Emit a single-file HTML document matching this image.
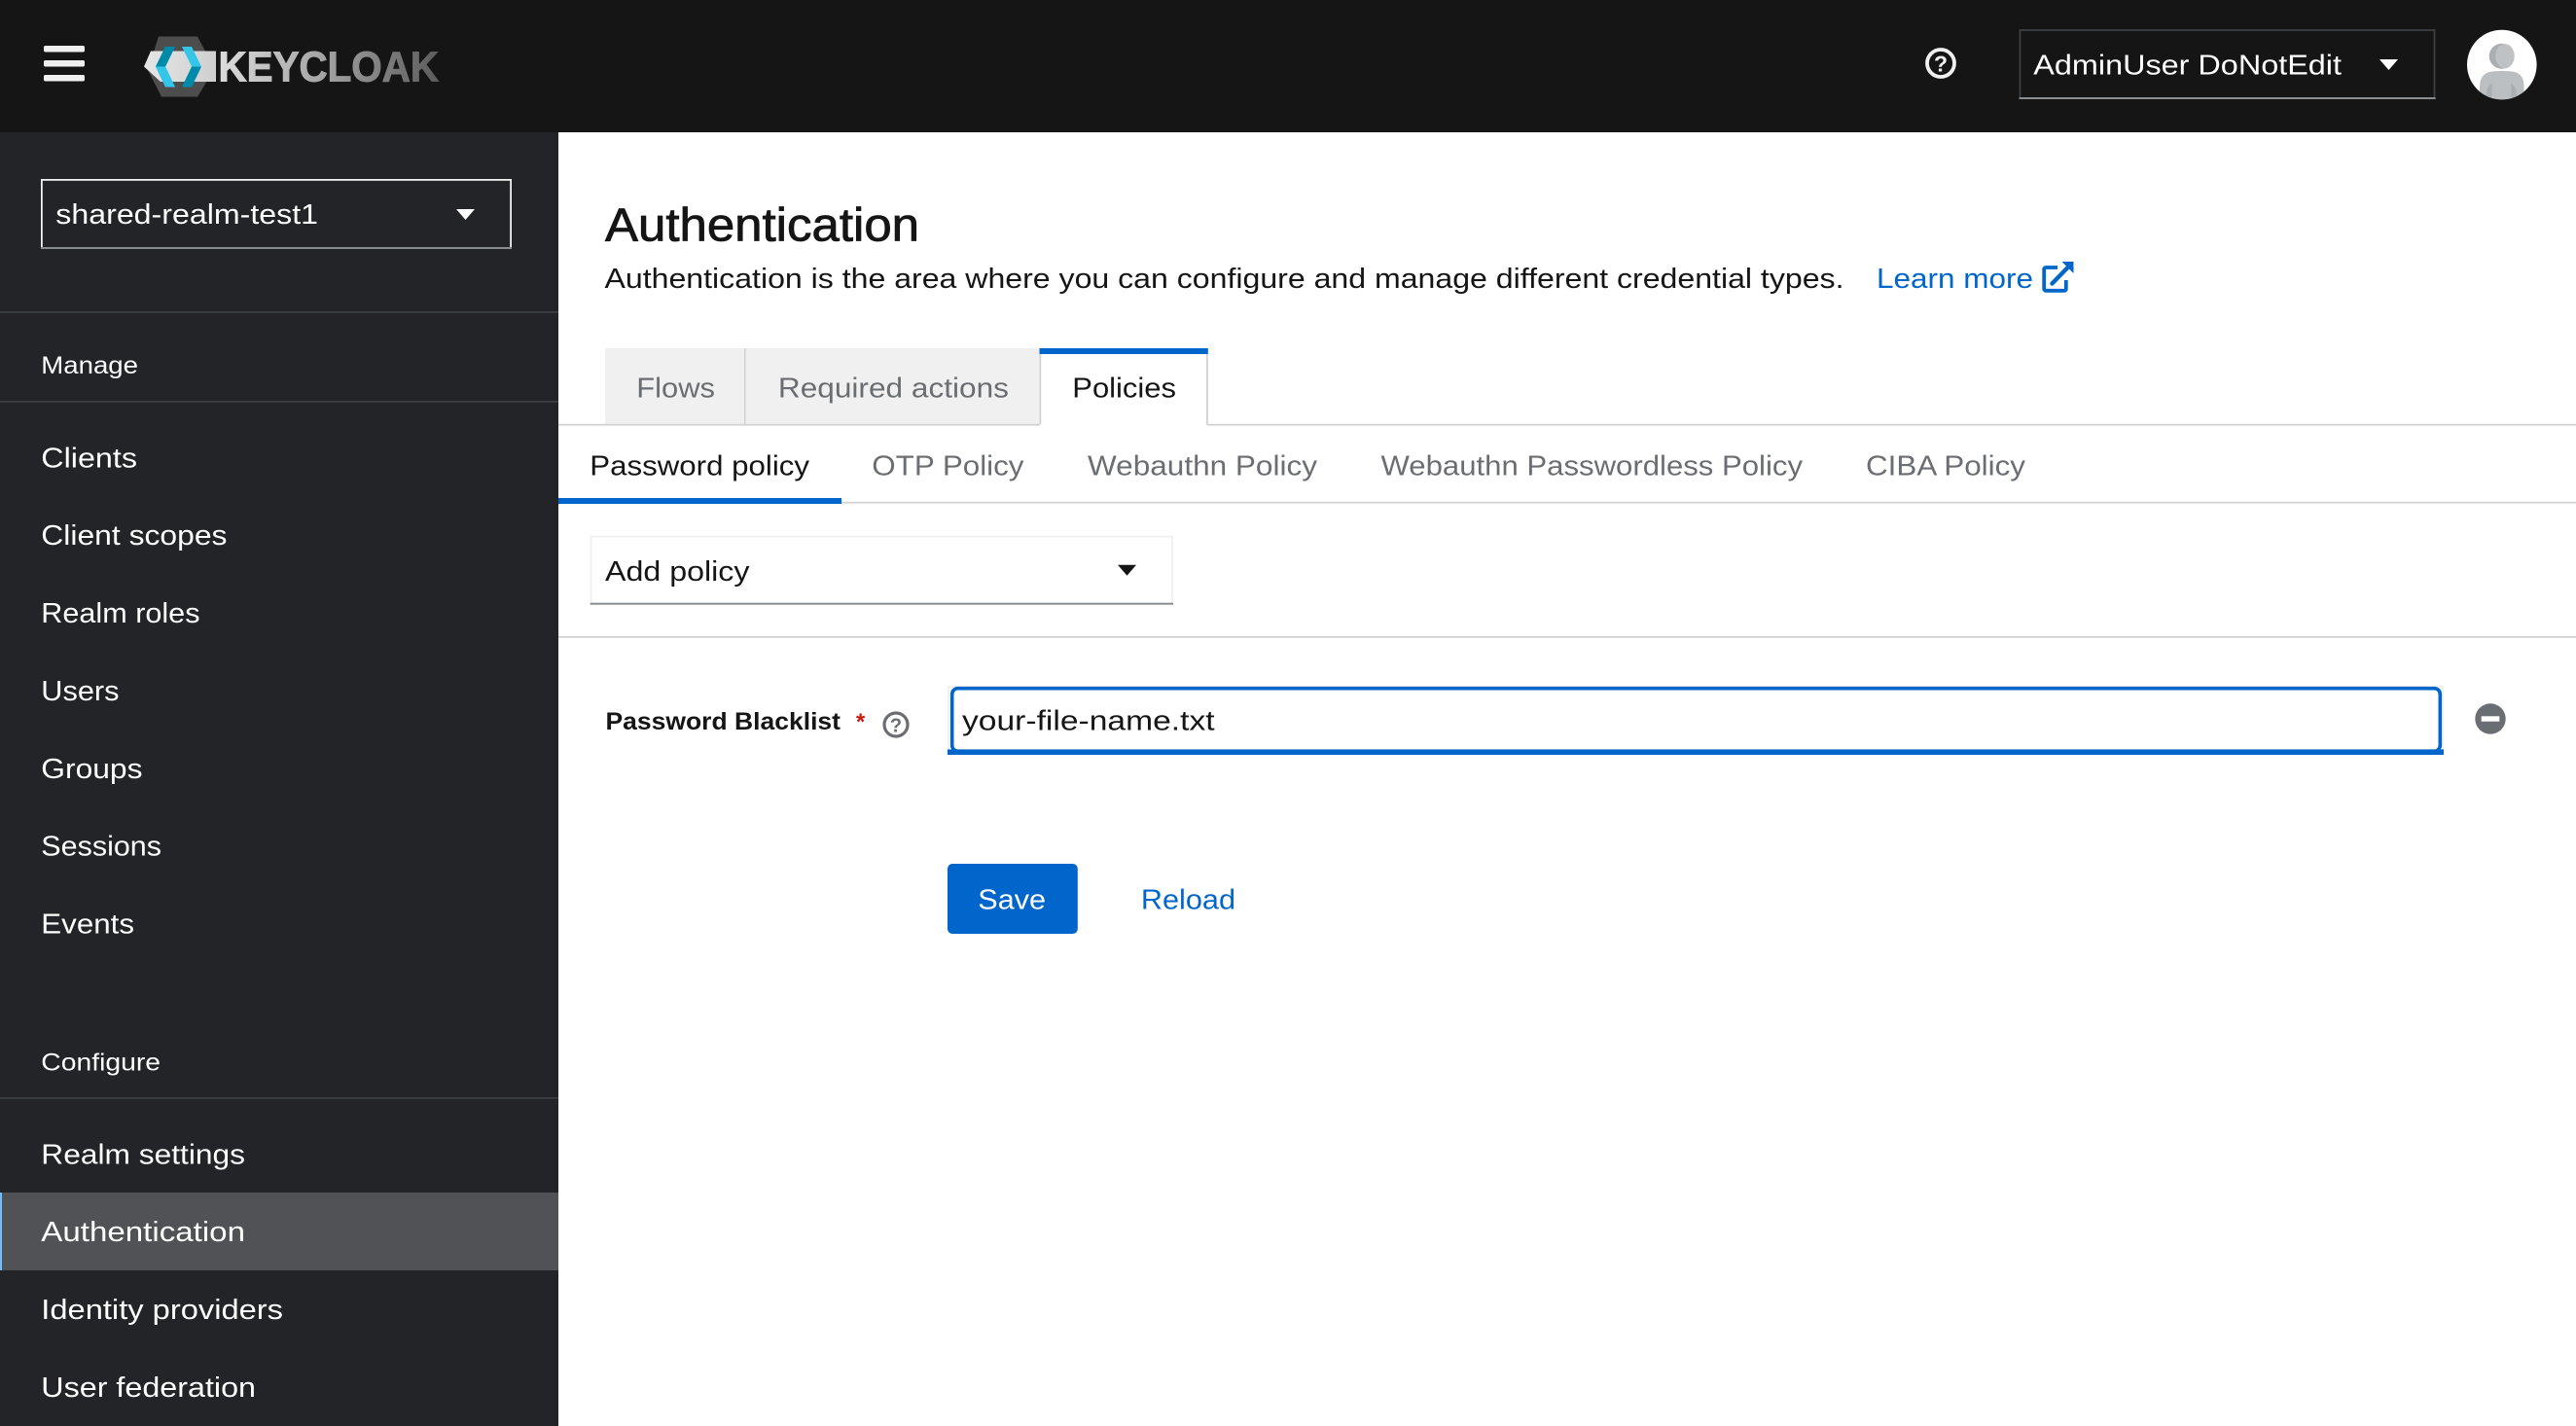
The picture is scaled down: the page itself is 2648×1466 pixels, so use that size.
<!DOCTYPE html>
<html lang="en">
<head>
<meta charset="utf-8">
<title>Authentication - Keycloak</title>
<style>
html,body{margin:0;padding:0;background:#fff;width:2648px;height:1466px;overflow:hidden}
svg{display:block;font-family:"Liberation Sans",sans-serif}
.n{font-size:29px;fill:#fff}
.s{font-size:25px;fill:#fff}
.d{font-size:29px;fill:#151515}
.g{font-size:29px;fill:#6a6e73}
.b{font-size:29px;fill:#06c}
</style>
</head>
<body>
<svg xmlns="http://www.w3.org/2000/svg" width="2648" height="1466" viewBox="0 0 2648 1466">
<defs>
<linearGradient id="kc" gradientUnits="userSpaceOnUse" x1="225" y1="0" x2="451" y2="0"><stop offset="0" stop-color="#dcdcdc"/><stop offset=".5" stop-color="#a0a0a0"/><stop offset="1" stop-color="#5c5c5c"/></linearGradient>
<linearGradient id="band" gradientUnits="userSpaceOnUse" x1="148" y1="0" x2="222" y2="0"><stop offset="0" stop-color="#e6e6e6"/><stop offset="1" stop-color="#cfcfcf"/></linearGradient>
<clipPath id="av"><circle cx="2571.8" cy="66.5" r="35.8"/></clipPath>
</defs>

<!-- masthead -->
<rect x="0" y="0" width="2648" height="136" fill="#151515"/>
<g fill="#f0f0f0"><rect x="45" y="47" width="42" height="6.5" rx="1.7"/><rect x="45" y="62" width="42" height="6.5" rx="1.7"/><rect x="45" y="77" width="42" height="6.5" rx="1.7"/></g>

<!-- logo -->
<polygon points="163,37.5 203,37.5 216,62 216,78 203,99.5 166,99.5 152,72" fill="#4d4d4d"/>
<polygon points="155,52.5 222,52.5 222,84 165,84 148,68.5" fill="url(#band)"/>
<polygon points="170,48 180,48 170,68.5 180,89.5 170,89.5 160,68.5" fill="#00b8e3"/>
<polygon points="160,68.5 170,68.5 180,89.5 170,89.5" fill="#33c6e9"/>
<polygon points="160,68.5 170,48 180,48 170,68.5" fill="#008aaa"/>
<polygon points="187,48 197,48 207,68.5 197,68.5" fill="#33c6e9"/>
<polygon points="207,68.5 197,89.5 187,89.5 197,68.5" fill="#008aaa"/>
<text x="224.500" y="83.500" font-size="44" font-weight="700" fill="url(#kc)" stroke="url(#kc)" stroke-width="1" textLength="226.500" lengthAdjust="spacingAndGlyphs">KEYCLOAK</text>

<!-- help -->
<circle cx="1995" cy="65" r="14" fill="none" stroke="#f0f0f0" stroke-width="3.800"/>
<text x="1995" y="73.500" font-size="23" font-weight="700" fill="#f0f0f0" text-anchor="middle">?</text>

<!-- user dropdown -->
<rect x="2076.5" y="31" width="426" height="70" fill="none" stroke="#3c3f42" stroke-width="1.8"/>
<rect x="2075.6" y="100" width="428" height="2" fill="#8a8d90"/>
<text class="n" x="2090.300" y="76.500" textLength="316.700" lengthAdjust="spacingAndGlyphs">AdminUser DoNotEdit</text>
<polygon points="2446,61 2465,61 2455.5,72" fill="#fff"/>

<!-- avatar -->
<circle cx="2571.8" cy="66.5" r="35.8" fill="#fff"/>
<g clip-path="url(#av)">
<path d="M2549 110V90c0-9 3-14 10-16 8-1.500 18-1.500 26 0 7 2 9.500 7 9.500 16v20z" fill="#bcbfc1"/>
<path d="M2556 110V95c1-6 3-8 6-9l-1 24zM2587 110V95c-1-6-3-8-6-9l1 24z" fill="#acafb1"/>
<circle cx="2571.700" cy="57.700" r="13" fill="#acafb1"/>
<ellipse cx="2575" cy="57.700" rx="9.700" ry="12.500" fill="#bfc2c4"/>
</g>

<!-- sidebar -->
<rect x="0" y="136" width="574" height="1330" fill="#222428"/>
<rect x="42.900" y="184.900" width="482.200" height="70" fill="none" stroke="#f0f0f0" stroke-width="1.800"/>
<rect x="42" y="254" width="484" height="2" fill="#8a8d90"/>
<text class="n" x="57.300" y="230" textLength="269.700" lengthAdjust="spacingAndGlyphs">shared-realm-test1</text>
<polygon points="469,215 488,215 478.500,226" fill="#fff"/>
<rect x="0" y="320" width="574" height="1.800" fill="#3c3f42"/>
<text class="s" x="42.300" y="384" textLength="99.700" lengthAdjust="spacingAndGlyphs">Manage</text>
<rect x="0" y="412" width="574" height="1.800" fill="#3c3f42"/>
<text class="n" x="42.300" y="480.500" textLength="98.700" lengthAdjust="spacingAndGlyphs">Clients</text>
<text class="n" x="42.300" y="560.200" textLength="191.200" lengthAdjust="spacingAndGlyphs">Client scopes</text>
<text class="n" x="42.300" y="640" textLength="163.200" lengthAdjust="spacingAndGlyphs">Realm roles</text>
<text class="n" x="42.300" y="720" textLength="80.200" lengthAdjust="spacingAndGlyphs">Users</text>
<text class="n" x="42.300" y="800" textLength="104.200" lengthAdjust="spacingAndGlyphs">Groups</text>
<text class="n" x="42.300" y="879.700" textLength="123.700" lengthAdjust="spacingAndGlyphs">Sessions</text>
<text class="n" x="42.300" y="959.500" textLength="95.700" lengthAdjust="spacingAndGlyphs">Events</text>
<text class="s" x="42.300" y="1100.500" textLength="122.700" lengthAdjust="spacingAndGlyphs">Configure</text>
<rect x="0" y="1128" width="574" height="1.800" fill="#3c3f42"/>
<text class="n" x="42.300" y="1196.400" textLength="209.700" lengthAdjust="spacingAndGlyphs">Realm settings</text>
<rect x="0" y="1226" width="574" height="80" fill="#505256"/>
<rect x="0" y="1226" width="2" height="80" fill="#73bcf7"/>
<text class="n" x="42.300" y="1276.200" textLength="209.700" lengthAdjust="spacingAndGlyphs">Authentication</text>
<text class="n" x="42.300" y="1356.200" textLength="248.700" lengthAdjust="spacingAndGlyphs">Identity providers</text>
<text class="n" x="42.300" y="1436.200" textLength="220.700" lengthAdjust="spacingAndGlyphs">User federation</text>

<!-- page heading -->
<text x="622" y="247.300" font-size="48" fill="#151515" stroke="#151515" stroke-width=".8" textLength="323" lengthAdjust="spacingAndGlyphs">Authentication</text>
<text class="d" x="621.500" y="296.200" textLength="1274" lengthAdjust="spacingAndGlyphs">Authentication is the area where you can configure and manage different credential types.</text>
<text class="b" x="1929" y="296.200" textLength="161" lengthAdjust="spacingAndGlyphs">Learn more</text>
<path d="M2115 275h-12a1.800 1.800 0 0 0-1.800 1.800v20.200a1.800 1.800 0 0 0 1.800 1.800h19a1.800 1.800 0 0 0 1.800-1.800v-9" fill="none" stroke="#06c" stroke-width="3.800"/>
<path d="M2109.500 291.500L2126 274.500" fill="none" stroke="#06c" stroke-width="4.400" stroke-linecap="round"/>
<polygon points="2119.500,269 2131.500,269 2131.500,281" fill="#06c"/>

<!-- primary tabs -->
<rect x="622" y="358" width="143" height="78" fill="#f0f0f0"/>
<rect x="765" y="358" width="1.800" height="78" fill="#d2d2d2"/>
<rect x="766.800" y="358" width="301.700" height="78" fill="#f0f0f0"/>
<rect x="574" y="435.800" width="2074" height="1.800" fill="#d2d2d2"/>
<rect x="1069" y="358" width="172.400" height="80" fill="#fff"/>
<rect x="1068.500" y="364" width="1.800" height="72" fill="#d2d2d2"/>
<rect x="1240" y="364" width="1.800" height="73" fill="#d2d2d2"/>
<rect x="1068.500" y="358" width="173.300" height="6" fill="#06c"/>
<text class="g" x="654.300" y="408.400" textLength="80.700" lengthAdjust="spacingAndGlyphs">Flows</text>
<text class="g" x="799.900" y="408.400" textLength="237.100" lengthAdjust="spacingAndGlyphs">Required actions</text>
<text class="d" x="1102.300" y="408.400" textLength="106.700" lengthAdjust="spacingAndGlyphs">Policies</text>

<!-- secondary tabs -->
<rect x="574" y="515.800" width="2074" height="1.800" fill="#d2d2d2"/>
<rect x="574" y="512" width="291" height="6" fill="#06c"/>
<text class="d" x="606.300" y="488.400" textLength="225.700" lengthAdjust="spacingAndGlyphs">Password policy</text>
<text class="g" x="896.300" y="488.400" textLength="156.200" lengthAdjust="spacingAndGlyphs">OTP Policy</text>
<text class="g" x="1118" y="488.400" textLength="236" lengthAdjust="spacingAndGlyphs">Webauthn Policy</text>
<text class="g" x="1419.500" y="488.400" textLength="433.500" lengthAdjust="spacingAndGlyphs">Webauthn Passwordless Policy</text>
<text class="g" x="1918" y="488.400" textLength="164" lengthAdjust="spacingAndGlyphs">CIBA Policy</text>

<!-- add policy select -->
<rect x="607.600" y="551.600" width="597.500" height="69" fill="#fff" stroke="#f0f0f0" stroke-width="1.800"/>
<rect x="606.700" y="619.700" width="599.300" height="2" fill="#8a8d90"/>
<text class="d" x="622" y="596.900" textLength="148.500" lengthAdjust="spacingAndGlyphs">Add policy</text>
<polygon points="1149,580.700 1168,580.700 1158.500,591.700" fill="#151515"/>
<rect x="574" y="654" width="2074" height="1.800" fill="#d2d2d2"/>

<!-- form row -->
<text x="622.500" y="750" font-size="25" font-weight="700" fill="#151515" textLength="241.500" lengthAdjust="spacingAndGlyphs">Password Blacklist</text>
<text x="880" y="750" font-size="23.600" font-weight="700" fill="#c9190b">*</text>
<circle cx="921" cy="745" r="12" fill="none" stroke="#6a6e73" stroke-width="3.200"/>
<text x="921" y="752.500" font-size="20" font-weight="700" fill="#6a6e73" text-anchor="middle">?</text>

<rect x="974.900" y="705.900" width="1536.200" height="69" fill="#fff" stroke="#f0f0f0" stroke-width="1.800"/>
<rect x="978.700" y="707.700" width="1529.600" height="64.600" rx="6" fill="#fff" stroke="#06c" stroke-width="3.600"/>
<rect x="974" y="770.400" width="1538" height="5.600" fill="#06c"/>
<text class="d" x="989" y="750.400" textLength="259.600" lengthAdjust="spacingAndGlyphs">your-file-name.txt</text>

<circle cx="2560" cy="739" r="15.700" fill="#6a6e73"/>
<rect x="2550.700" y="736.300" width="18.600" height="5.400" fill="#fff"/>

<!-- actions -->
<rect x="974" y="888" width="133.800" height="72" rx="5" fill="#06c"/>
<text x="1005.300" y="934.400" font-size="29" fill="#fff" textLength="69.700" lengthAdjust="spacingAndGlyphs">Save</text>
<text class="b" x="1172.900" y="934.400" textLength="97.100" lengthAdjust="spacingAndGlyphs">Reload</text>
</svg>
</body>
</html>
